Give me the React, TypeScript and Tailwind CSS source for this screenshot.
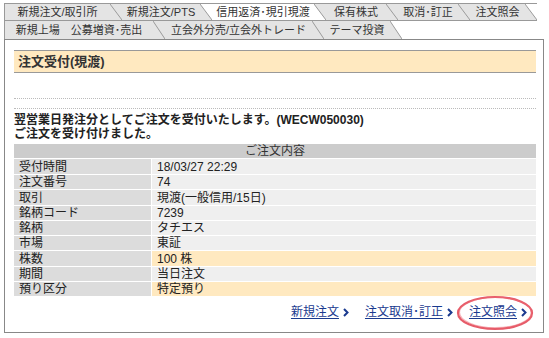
const row1 = [
  { label: "新規注文/取引所", w: "w-[106px]", active: false },
  { label: "新規注文/PTS", w: "w-[78px]", active: false },
  { label: "信用返済･現引現渡", w: "w-[102px]", active: true },
  { label: "保有株式", w: "w-[60px]", active: false },
  { label: "取消･訂正", w: "w-[60px]", active: false },
  { label: "注文照会", w: "w-[55px]", active: false },
]

const row2 = [
  { label: "新規上場　公募増資･売出", w: "w-[149px]", active: false },
  { label: "立会外分売/立会外トレード", w: "w-[147px]", active: false },
  { label: "テーマ投資", w: "w-[66px]", active: false },
]

const details = [
  { k: "受付時間", v: "18/03/27 22:29", h: "h-[16px]", hl: false },
  { k: "注文番号", v: "74", h: "h-[15px]", hl: false },
  { k: "取引", v: "現渡(一般信用/15日)", h: "h-[16px]", hl: false },
  { k: "銘柄コード", v: "7239", h: "h-[15px]", hl: false },
  { k: "銘柄", v: "タチエス", h: "h-[15px]", hl: false },
  { k: "市場", v: "東証", h: "h-[15px]", hl: false },
  { k: "株数", v: "100 株", h: "h-[16px]", hl: true },
  { k: "期間", v: "当日注文", h: "h-[15px]", hl: false },
  { k: "預り区分", v: "特定預り", h: "h-[15px]", hl: true },
]

const TAB = "#e4e4e4"

function Slant({ left, right, h }: { left: string; right: string; h: number }) {
  return (
    <svg width="12" height={h} className="block shrink-0">
      <polygon points={`0,0 12,${h} 0,${h}`} fill={left} />
      <polygon points={`0,0 12,0 12,${h}`} fill={right} />
      <line x1="0" y1="0" x2="12" y2={h} stroke="#999" strokeWidth="1" />
    </svg>
  )
}

function TabRow({ tabs, top }: { tabs: typeof row1; top: boolean }) {
  const h = top ? 17 : 18
  return (
    <div className={`flex w-fit ${top ? "border-b border-[#999]" : ""}`}>
      {tabs.map((t, i) => {
        const next = tabs[i + 1]
        const bg = t.active ? "#ffffff" : TAB
        const nextBg = next ? (next.active ? "#ffffff" : TAB) : "#ffffff"
        return (
          <div key={t.label} className="flex">
            <div
              className={`${t.w} ${top ? "h-[17px] border-t" : "h-[18px]"} ${i === 0 ? "border-l" : ""} ${
                t.active ? "bg-white" : "bg-[#e4e4e4]"
              } border-[#999] flex items-center justify-center text-[11px] leading-[13px] text-[#333] whitespace-nowrap`}
            >
              {t.label}
            </div>
            <div className={top ? "border-t border-[#999]" : ""}>
              <Slant left={bg} right={nextBg} h={top ? h - 1 : h} />
            </div>
          </div>
        )
      })}
    </div>
  )
}

function Chevron() {
  return (
    <svg width="6" height="9" viewBox="0 0 6 9" className="ml-[4px] inline-block">
      <polyline points="1,1 4.5,4.5 1,8" fill="none" stroke="#1a3a8f" strokeWidth="2" />
    </svg>
  )
}

function FooterLink({ label, circled }: { label: string; circled?: boolean }) {
  return (
    <div className="relative flex items-center">
      <span className="underline underline-offset-2 text-[#1a3a8f]">{label}</span>
      <Chevron />
      {circled && (
        <svg
          width="78"
          height="36"
          viewBox="0 0 78 36"
          className="absolute left-[-13px] top-[-10px] pointer-events-none"
        >
          <ellipse cx="39" cy="18" rx="37" ry="16" fill="none" stroke="#e2404f" strokeOpacity="0.85" strokeWidth="2.2" />
          <ellipse cx="39.5" cy="17.5" rx="36" ry="15.2" fill="none" stroke="#f06a75" strokeOpacity="0.5" strokeWidth="1.2" />
        </svg>
      )}
    </div>
  )
}

export default function App() {
  return (
    <div className="w-[549px] h-[338px] bg-white pt-[3px] pl-[4px] font-['Liberation_Sans','Noto_Sans_CJK_JP',sans-serif] text-[#222]">
      <TabRow tabs={row1} top />
      <TabRow tabs={row2} top={false} />

      <div className="w-[540px] h-[294px] border border-[#888] pl-[9px] pr-[7px]">
        <div className="mt-[10px] border-t border-b border-[#999] bg-[#ffe9c0] h-[23px] flex items-center pl-[4px] text-[13px] font-bold leading-[15px] text-[#333]">
          注文受付(現渡)
        </div>

        <div className="mt-[25px] h-[11px] border-y border-dotted border-[#bbb]" />

        <div className="mt-[4px] text-[12px] font-bold leading-[14px] text-[#222]">
          <p>翌営業日発注分としてご注文を受付いたします。(WECW050030)</p>
          <p>ご注文を受け付けました。</p>
        </div>

        <div className="mt-[3px] text-[12px] leading-[14px]">
          <div className="h-[14px] bg-[#cccccc] flex items-center justify-center text-[#333]">ご注文内容</div>
          {details.map((d) => (
            <div key={d.k} className={`${d.h} flex border-t border-white`}>
              <div className="w-[138px] bg-[#dcdcdc] flex items-center pl-[5px] border-r border-white">{d.k}</div>
              <div className={`flex-1 ${d.hl ? "bg-[#ffe9c0]" : "bg-[#efefef]"} flex items-center pl-[5px]`}>{d.v}</div>
            </div>
          ))}
        </div>

        <div className="mt-[9px] pr-[9px] flex justify-end gap-[16px] text-[12px] leading-[14px]">
          <FooterLink label="新規注文" />
          <FooterLink label="注文取消･訂正" />
          <FooterLink label="注文照会" circled />
        </div>
      </div>
    </div>
  )
}
